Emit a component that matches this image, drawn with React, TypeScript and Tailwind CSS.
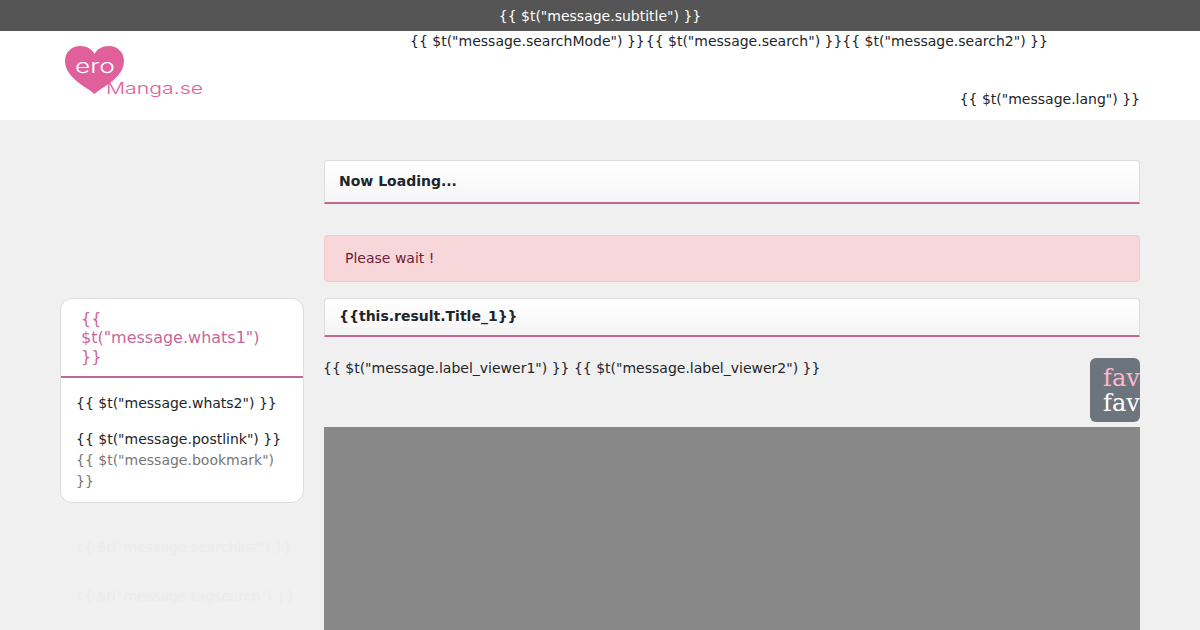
const font = "font-['DejaVu_Sans',sans-serif]"

function Logo() {
  return (
    <svg viewBox="0 0 140 52" className="block h-[52px] w-[140px]">
      <path
        d="M29.5 48 C22 41 0 32 0 15 C0 6 7 0 15 0 C22 0 27 3 29.5 8 C32 3 37 0 44 0 C52 0 59 6 59 15 C59 32 37 41 29.5 48 Z"
        fill="#e0609b"
      />
      <text
        x="10"
        y="27"
        fill="#fff"
        fontFamily="Inter, sans-serif"
        fontWeight="300"
        fontSize="19"
        textLength="40"
        lengthAdjust="spacingAndGlyphs"
      >
        ero
      </text>
      <text
        x="41"
        y="48"
        fill="#e0609b"
        fontFamily="Inter, sans-serif"
        fontWeight="300"
        fontSize="16"
        textLength="97"
        lengthAdjust="spacingAndGlyphs"
      >
        Manga.se
      </text>
    </svg>
  )
}

export default function App() {
  return (
    <div className={`h-[630px] overflow-hidden bg-[#f0f0f0] text-sm text-[#212529] ${font}`}>
      <div className="flex h-[31px] items-center justify-center bg-[#555] text-white">
        {'{{ $t("message.subtitle") }}'}
      </div>
      <div className="flex h-[89px] bg-white pl-[65px] pr-[60px]">
        <div className="pt-[15px]">
          <Logo />
        </div>
        <div className="flex-1">
          <div className="flex pl-[205px] pt-[1px] leading-[19px]">
            <span>{'{{ $t("message.searchMode") }}'}</span>
            <span className="ml-[1px]">{'{{ $t("message.search") }}'}</span>
            <span>{'{{ $t("message.search2") }}'}</span>
          </div>
          <div className="mt-[39px] text-right leading-[19px]">{'{{ $t("message.lang") }}'}</div>
        </div>
      </div>

      <div className="flex gap-5 px-[60px]">
        <div className="w-[244px] shrink-0 pt-[178px]">
          <div className="overflow-hidden rounded-xl border border-[#ddd] bg-white">
            <div className="border-b-2 border-[#c06a92] pb-[10px] pl-5 pr-10 pt-[10px] text-base leading-[19px] text-[#c8679a]">
              {'{{ $t("message.whats1") }}'}
            </div>
            <div className="px-[15px] pb-[10px] pt-[15px] leading-[21px]">
              <div>{'{{ $t("message.whats2") }}'}</div>
              <div className="mt-[15px]">{'{{ $t("message.postlink") }}'}</div>
              <div className="text-[#777]">{'{{ $t("message.bookmark") }}'}</div>
            </div>
          </div>
          <div className="mt-[34px] pl-[15px] text-[#ececec]">{'{{ $t("message.searchlist") }}'}</div>
          <div className="mt-[29px] pl-[15px] text-[#ececec]">{'{{ $t("message.tagsearch") }}'}</div>
        </div>

        <div className="min-w-0 flex-1 pt-10">
          <div className="h-[44px] rounded-t border border-[#ddd] border-b-2 border-b-[#c06a92] bg-gradient-to-b from-white to-[#f5f5f5] pl-[14px] pt-[10px] font-bold leading-5">
            Now Loading...
          </div>
          <div className="mt-[31px] h-[47px] rounded border border-[#f5c6cb] bg-[#f8d7da] pl-5 pt-[12px] leading-5 text-[#6f1d36]">
            Please wait !
          </div>
          <div className="mt-[16px] h-[39px] rounded-t border border-[#ddd] border-b-2 border-b-[#c06a92] bg-gradient-to-b from-white to-[#f5f5f5] pl-[14px] pt-[7px] font-bold leading-5">
            {"{{this.result.Title_1}}"}
          </div>
          <div className="flex h-[90px] justify-between">
            <div className="-ml-px pt-[21px] leading-5">
              {'{{ $t("message.label_viewer1") }} {{ $t("message.label_viewer2") }}'}
            </div>
            <div className="mt-[21px] h-[64px] w-[50px] overflow-hidden rounded-md bg-[#6c757d] pl-[13px] pt-[8px] font-['DejaVu_Serif',serif] text-[24px] leading-[25px]">
              <div className="text-[#ffb6c8]">fav</div>
              <div className="text-white">fav</div>
            </div>
          </div>
          <div className="h-[210px] bg-[#888]" />
        </div>
      </div>
    </div>
  )
}
